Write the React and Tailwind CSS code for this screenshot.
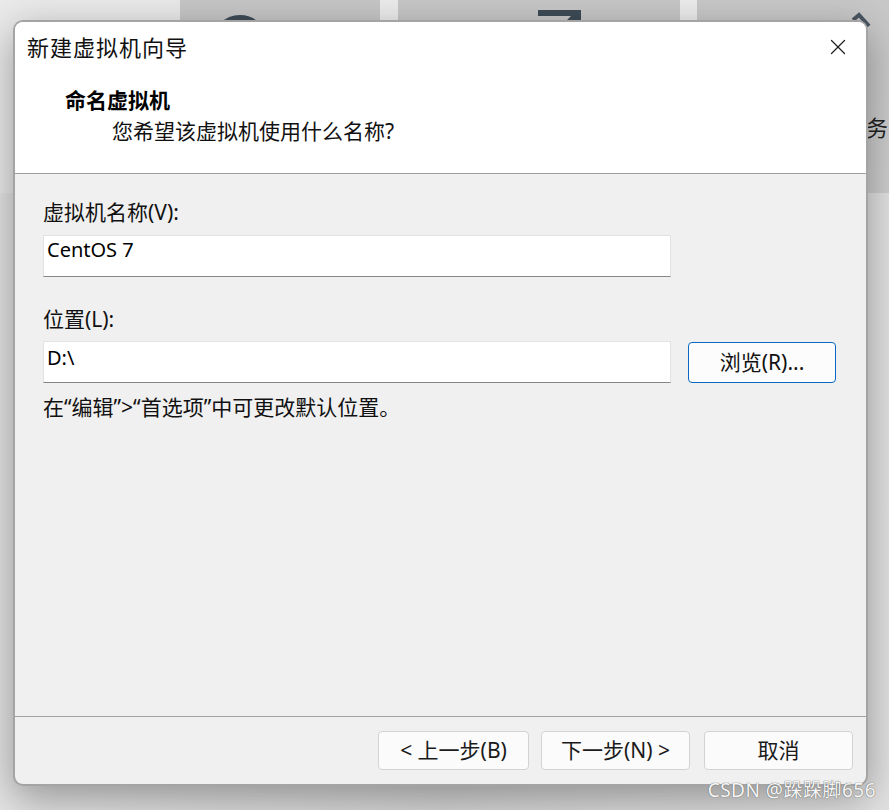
import { X } from 'lucide-react'

const font = { fontFamily: '"Segoe UI", "Noto Sans", "Noto Sans CJK SC", sans-serif' }

function Field({ value, top = 'pt-[2px]' }) {
  return (
    <div className={`w-[628px] h-[42px] bg-white border border-[#e2e2e2] border-b-[#868686] pl-[3px] ${top} text-[20px] leading-[28px] text-black`}>
      {value}
    </div>
  )
}

function FooterButton({ children, className = '' }) {
  return (
    <button className={`h-[39px] bg-[#fbfbfb] border border-[#d3d3d3] rounded-[4px] text-[21px] text-[#1a1a1a] flex items-center justify-center ${className}`}>
      {children}
    </button>
  )
}

export default function App() {
  return (
    <div className="relative w-[889px] h-[810px] overflow-hidden bg-gradient-to-r from-[#e4e4e4] via-[#d6d6d6] to-[#e2e2e2]" style={font}>
      {/* page behind the dialog */}
      <div className="flex h-[193px]">
        <div className="w-[180px] bg-[#eaeaea]" />
        <div className="w-[200px] bg-gradient-to-b from-[#c6c6c6] to-[#cdcdcd] pt-[13px] pl-[32px]">
          <svg width="60" height="60" viewBox="0 0 60 60">
            <circle cx="28" cy="30" r="25" fill="none" stroke="#3e4b56" strokeWidth="6" />
          </svg>
        </div>
        <div className="w-[18px] bg-[#ececec]" />
        <div className="w-[282px] bg-gradient-to-b from-[#c7c7c7] to-[#cdcdcd] pt-[10px] pl-[138px]">
          <svg width="48" height="48" viewBox="0 0 48 48">
            <path d="M2 3 H42 V40 M42 3 L4 42" fill="none" stroke="#3e4b56" strokeWidth="6" />
          </svg>
        </div>
        <div className="w-[17px] bg-[#ececec]" />
        <div className="flex-1 bg-gradient-to-b from-[#c8c8c8] to-[#cecece] relative">
          <svg className="absolute left-[150px] top-[12px]" width="30" height="30" viewBox="0 0 30 30">
            <path d="M6 8 L12 3 L22 14" fill="none" stroke="#4a5660" strokeWidth="4" />
          </svg>
          <div className="absolute left-[147px] top-[112px] text-[22px] leading-[30px] text-[#222]">服务</div>
        </div>
      </div>

      {/* dialog */}
      <div className="absolute left-[13px] top-[20px] w-[855px] h-[766px] flex flex-col bg-[#f0f0f0] border-2 border-[#a4a4a4] rounded-[10px] overflow-hidden shadow-[0_12px_40px_rgba(0,0,0,0.35)]">
        <div className="bg-white border-b border-[#a0a0a0] h-[152px] flex flex-col">
          <div className="h-[50px] flex items-center justify-between pl-[12px] pr-[15px]">
            <span className="text-[22px] tracking-[1px] text-[#111]">新建虚拟机向导</span>
            <X className="w-[26px] h-[26px] text-[#222]" strokeWidth={1.2} />
          </div>
          <div className="mt-[13px] h-[31px] pl-[50px] flex items-center text-[21px] font-bold text-black">命名虚拟机</div>
          <div className="h-[31px] pl-[97px] flex items-center text-[21px] text-[#111]">您希望该虚拟机使用什么名称?</div>
        </div>

        <div className="flex-1 pl-[28px] pt-[25px] flex flex-col">
          <div className="h-[28px] flex items-center text-[21px] text-[#111]">虚拟机名称(V):</div>
          <div className="mt-[8px]">
            <Field value="CentOS 7" top="pt-0" />
          </div>
          <div className="mt-[29px] h-[28px] flex items-center text-[21px] text-[#111]">位置(L):</div>
          <div className="mt-[7px] flex items-start gap-[17px]">
            <div className="h-[43px]">
              <Field value="D:\" />
            </div>
            <button className="mt-[1px] w-[148px] h-[41px] bg-[#fcfcfc] border border-[#0a68c4] rounded-[4px] text-[21px] text-[#111] flex items-center justify-center">
              浏览(R)...
            </button>
          </div>
          <div className="mt-[10px] h-[28px] flex items-center text-[21px] text-[#111]">在“编辑”&gt;“首选项”中可更改默认位置。</div>
        </div>

        <div className="h-[68px] border-t border-[#a0a0a0] flex items-start justify-end pt-[14px] pr-[13px]">
          <FooterButton className="w-[151px]">&lt; 上一步(B)</FooterButton>
          <FooterButton className="w-[149px] ml-[12px]">下一步(N) &gt;</FooterButton>
          <FooterButton className="w-[149px] ml-[14px]">取消</FooterButton>
        </div>
      </div>

      {/* watermark */}
      <div className="absolute right-[13px] top-[777px] text-[19px] leading-[26px] tracking-[0.5px] text-[#f6f6f6] [text-shadow:0_0_1px_#6e6e6e,0_0_1px_#6e6e6e]">
        CSDN @跺跺脚656
      </div>
    </div>
  )
}
